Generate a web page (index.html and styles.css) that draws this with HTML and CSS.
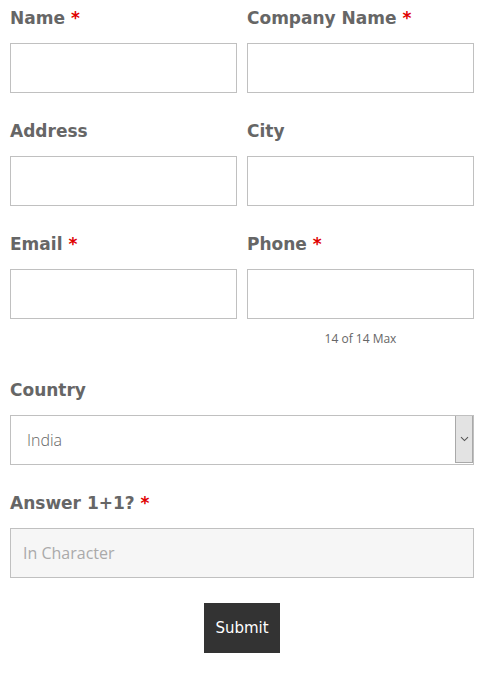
FILE: index.html
```html
<!DOCTYPE html>
<html lang="en">
<head>
<meta charset="utf-8">
<title>Contact form</title>
<link rel="stylesheet" href="styles.css">
</head>
<body>
<form class="form">
  <div class="row">
    <div class="field">
      <label class="label">Name <span class="req">*</span></label>
      <div class="input"></div>
    </div>
    <div class="field">
      <label class="label">Company Name <span class="req">*</span></label>
      <div class="input"></div>
    </div>
  </div>
  <div class="row">
    <div class="field">
      <label class="label">Address</label>
      <div class="input"></div>
    </div>
    <div class="field">
      <label class="label">City</label>
      <div class="input"></div>
    </div>
  </div>
  <div class="row row-last">
    <div class="field">
      <label class="label">Email <span class="req">*</span></label>
      <div class="input"></div>
    </div>
    <div class="field">
      <label class="label">Phone <span class="req">*</span></label>
      <div class="input"></div>
      <div class="hint">14 of 14 Max</div>
    </div>
  </div>
  <div class="full field-country">
    <label class="label">Country</label>
    <div class="select">
      <span class="select-value">India</span>
      <span class="select-btn">
        <svg width="9" height="6" viewBox="0 0 9 6"><path d="M1 1.2 L4.5 4.6 L8 1.2" fill="none" stroke="#555" stroke-width="1.1"/></svg>
      </span>
    </div>
  </div>
  <div class="full">
    <label class="label">Answer 1+1? <span class="req">*</span></label>
    <div class="input input-grey"><span class="placeholder">In Character</span></div>
  </div>
  <div class="actions">
    <button type="button" class="submit">Submit</button>
  </div>
</form>
</body>
</html>
```
FILE: styles.css
```css
html, body {
  margin: 0;
  padding: 0;
  background: #fff;
}
.form {
  padding: 5px 10px 0 10px;
  font-family: "DejaVu Sans", sans-serif;
}
.row {
  display: grid;
  grid-template-columns: 1fr 1fr;
  column-gap: 10px;
  margin-bottom: 25px;
}
.row-last {
  margin-bottom: 0;
}
.label {
  display: block;
  font-size: 17px;
  line-height: 26px;
  font-weight: bold;
  color: #666;
  margin-bottom: 12px;
}
.req {
  color: #e00000;
}
.input {
  height: 50px;
  box-sizing: border-box;
  border: 1px solid #c0c0c0;
  background: #fff;
  display: flex;
  align-items: center;
}
.input-grey {
  background: #f6f6f6;
}
.placeholder {
  padding-left: 12px;
  font-family: "Open Sans", sans-serif;
  font-size: 16px;
  color: #aaa;
}
.hint {
  margin-top: 12px;
  text-align: center;
  font-family: "Open Sans", sans-serif;
  font-size: 12px;
  line-height: 16px;
  color: #666;
}
.field-country {
  margin-top: 30px;
}
.full {
  margin-bottom: 25px;
}
.select {
  height: 50px;
  box-sizing: border-box;
  border: 1px solid #c0c0c0;
  display: flex;
  align-items: stretch;
}
.select-value {
  flex: 1;
  display: flex;
  align-items: center;
  padding-left: 16px;
  font-family: "Open Sans", sans-serif;
  font-size: 16px;
  font-weight: 300;
  color: #666;
}
.select-btn {
  width: 16px;
  margin-bottom: 1px;
  background: #e3e3e3;
  border: 1px solid #a9a9a9;
  border-top: 0;
  display: flex;
  align-items: center;
  justify-content: center;
}
.actions {
  display: flex;
  justify-content: center;
}
.submit {
  width: 76px;
  height: 50px;
  border: 0;
  background: #333;
  color: #fff;
  font-family: "DejaVu Sans", sans-serif;
  font-size: 15px;
  padding: 0;
}
```
